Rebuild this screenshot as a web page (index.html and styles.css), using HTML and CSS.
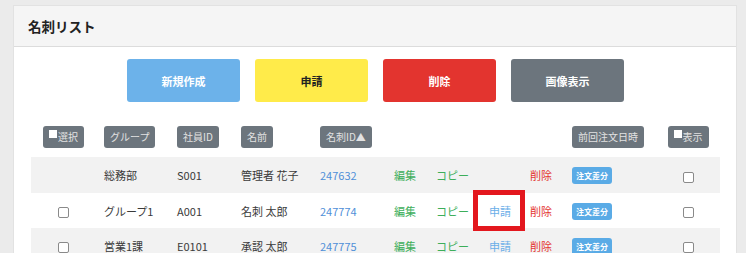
FILE: index.html
```html
<!DOCTYPE html>
<html lang="ja">
<head>
<meta charset="utf-8">
<link rel="stylesheet" href="styles.css">
</head>
<body>
<div class="card">
  <div class="card-header">名刺リスト</div>
  <div class="card-body">
    <div class="actions">
      <button class="btn btn-blue">新規作成</button>
      <button class="btn btn-yellow">申請</button>
      <button class="btn btn-red">削除</button>
      <button class="btn btn-gray">画像表示</button>
    </div>
    <table class="list">
      <colgroup>
        <col class="w65"><col class="w73"><col class="w64"><col class="w79"><col class="w74"><col class="w42"><col class="w53"><col class="w41"><col class="w42"><col class="w92"><col class="w64">
      </colgroup>
      <thead>
        <tr>
          <th class="center"><span class="hbadge"><span class="sq"></span>選択</span></th>
          <th><span class="hbadge">グループ</span></th>
          <th><span class="hbadge">社員ID</span></th>
          <th><span class="hbadge">名前</span></th>
          <th><span class="hbadge">名刺ID▲</span></th>
          <th></th><th></th><th></th><th></th>
          <th><span class="hbadge">前回注文日時</span></th>
          <th class="center"><span class="hbadge"><span class="sq"></span>表示</span></th>
        </tr>
      </thead>
      <tbody>
        <tr class="odd">
          <td class="center"></td>
          <td>総務部</td>
          <td>S001</td>
          <td>管理者 花子</td>
          <td class="link">247632</td>
          <td class="green">編集</td>
          <td class="green">コピー</td>
          <td></td>
          <td class="red">削除</td>
          <td><span class="hist">注文差分</span></td>
          <td class="center"><span class="cb"></span></td>
        </tr>
        <tr>
          <td class="center"><span class="cb"></span></td>
          <td>グループ1</td>
          <td>A001</td>
          <td>名刺 太郎</td>
          <td class="link">247774</td>
          <td class="green">編集</td>
          <td class="green">コピー</td>
          <td class="apply">申請<span class="mark"></span></td>
          <td class="red">削除</td>
          <td><span class="hist">注文差分</span></td>
          <td class="center"><span class="cb"></span></td>
        </tr>
        <tr class="odd">
          <td class="center"><span class="cb"></span></td>
          <td>営業1課</td>
          <td>E0101</td>
          <td>承認 太郎</td>
          <td class="link">247775</td>
          <td class="green">編集</td>
          <td class="green">コピー</td>
          <td class="apply">申請</td>
          <td class="red">削除</td>
          <td><span class="hist">注文差分</span></td>
          <td class="center"><span class="cb"></span></td>
        </tr>
      </tbody>
    </table>
  </div>
</div>
</body>
</html>
```

FILE: styles.css
```css
html, body {
  margin: 0;
  padding: 0;
}
body {
  background: #ebebeb;
  font-family: "Noto Sans CJK JP", "Noto Sans", sans-serif;
  color: #333;
  overflow: hidden;
  height: 253px;
}
.card {
  margin: 5px 9px 0 13px;
  background: #fff;
  border: 1px solid #e2e2e2;
  border-bottom: none;
  height: 247px;
  overflow: hidden;
}
.card-header {
  height: 40px;
  line-height: 40px;
  padding-left: 14px;
  background: #f5f5f5;
  border-bottom: 1px solid #dcdcdc;
  font-size: 13.5px;
  font-weight: bold;
  color: #222;
}
.card-body {
  padding: 12px 16px 0 17px;
}
.actions {
  display: flex;
  justify-content: center;
  gap: 15px;
}
.btn {
  width: 113px;
  height: 43px;
  border: none;
  border-radius: 3px;
  font-family: inherit;
  font-size: 11px;
  font-weight: bold;
  color: #fff;
  padding: 0;
}
.btn-blue { background: #6cb2ea; }
.btn-yellow { background: #ffeb4a; color: #222; }
.btn-red { background: #e3342f; }
.btn-gray { background: #6c757d; }

.list {
  margin-top: 15px;
  width: 689px;
  border-collapse: collapse;
  table-layout: fixed;
  font-size: 11px;
}
.w65 { width: 65px; }
.w73 { width: 73px; }
.w64 { width: 64px; }
.w79 { width: 79px; }
.w74 { width: 74px; }
.w42 { width: 42px; }
.w53 { width: 53px; }
.w41 { width: 41px; }
.w92 { width: 92px; }
.list th {
  height: 40px;
  padding: 0 0 0 8px;
  text-align: left;
  font-weight: normal;
  vertical-align: middle;
}
.list td {
  height: 35px;
  padding: 0 0 0 8px;
  vertical-align: middle;
  white-space: nowrap;
  color: #3a3a3a;
}
.list tbody tr:first-child td { height: 36px; }
.list .center { text-align: center; padding-left: 0; }
.list tr.odd td { background: #f2f2f2; }
.hbadge {
  display: inline-block;
  height: 22px;
  line-height: 22px;
  padding: 0 6px;
  background: #6c757d;
  color: #e2e2e2;
  border-radius: 3px;
  font-size: 10px;
  vertical-align: middle;
}
.sq {
  display: inline-block;
  width: 8px;
  height: 8px;
  background: #fff;
  vertical-align: 3px;
  margin-right: 1px;
}
.list td.link { color: #4f8fd8; }
.list td.green { color: #3dae5a; }
.list td.red { color: #e3342f; }
.list td.apply { color: #6aaee8; position: relative; }
.mark {
  position: absolute;
  z-index: 2;
  left: -8px;
  top: -3px;
  width: 42px;
  height: 31px;
  border: 5px solid #e3171e;
}
.hist {
  display: inline-block;
  height: 17px;
  line-height: 17px;
  padding: 0 4px;
  background: #5aabe6;
  color: #fff;
  border-radius: 3px;
  font-size: 8px;
  font-weight: bold;
}
.cb {
  display: inline-block;
  width: 9px;
  height: 9px;
  border: 1px solid #8a8a8a;
  border-radius: 2px;
  background: #fff;
  vertical-align: middle;
}
```
